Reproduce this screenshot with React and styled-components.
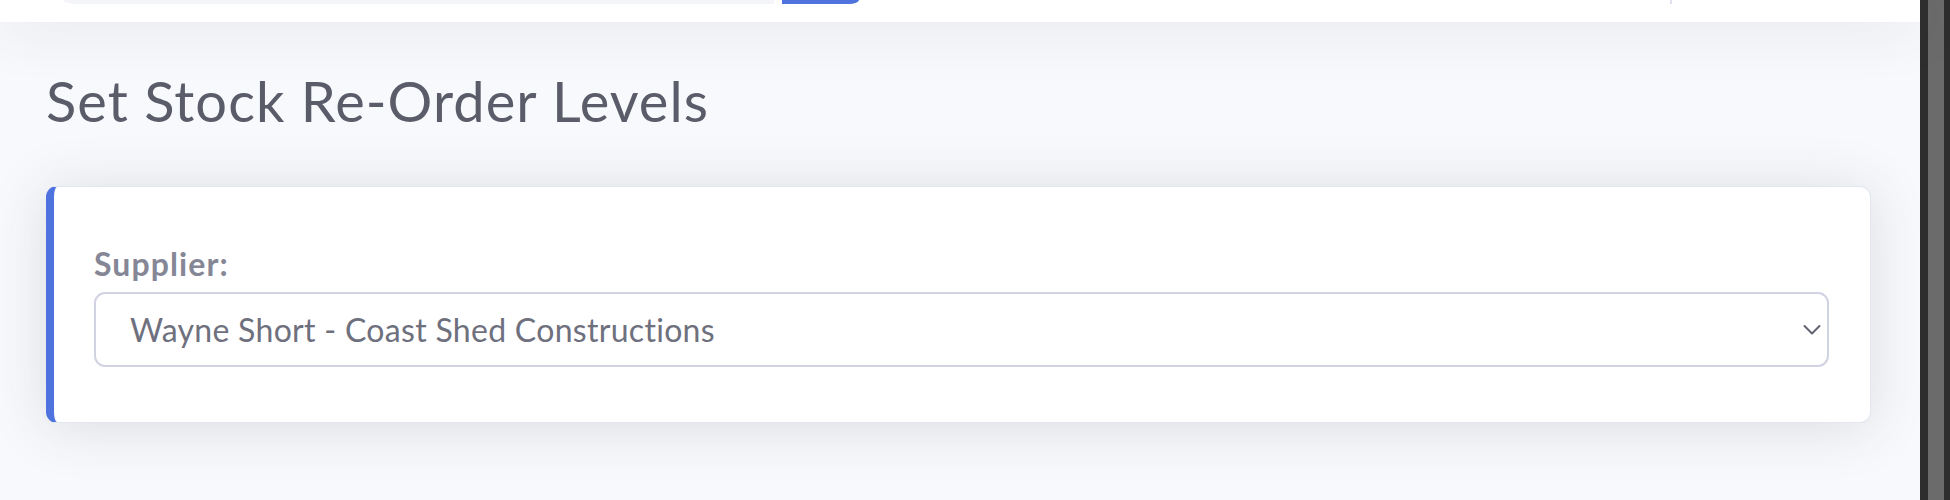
import React from "react";
import styled, { createGlobalStyle } from "styled-components";

const GlobalStyle = createGlobalStyle`
  html, body {
    margin: 0;
    padding: 0;
    background: #f8f9fc;
  }
  body {
    font-family: "Lato", "Noto Sans", sans-serif;
    -webkit-font-smoothing: antialiased;
  }
  * { box-sizing: border-box; }
`;

const Shell = styled.div`
  display: flex;
  width: 1950px;
  height: 500px;
  overflow: hidden;
`;

const Main = styled.div`
  flex: 1;
  display: flex;
  flex-direction: column;
  background: #f8f9fc;
  min-width: 0;
`;

const Topbar = styled.header`
  position: relative;
  z-index: 1;
  flex: none;
  height: 22px;
  display: flex;
  align-items: flex-start;
  padding-left: 63px;
  background: #ffffff;
  box-shadow: 0 4px 56px 0 rgba(58, 59, 69, 0.15);
`;

const SearchInput = styled.div`
  width: 711px;
  height: 4px;
  background: #f4f5f9;
  border-bottom-left-radius: 14px 4px;
`;

const SearchButton = styled.div`
  width: 77px;
  height: 4px;
  margin-left: 8px;
  background: #4e73df;
  border-bottom-right-radius: 10px 4px;
`;

const TopDivider = styled.div`
  width: 2px;
  height: 4px;
  margin-left: auto;
  margin-right: 248px;
  background: #dfe1ec;
`;

const Content = styled.main`
  flex: 1;
  padding: 45px 49px 0 46px;
`;

const Title = styled.h1`
  margin: 0 0 52px;
  font-size: 56px;
  line-height: 67px;
  font-weight: 400;
  letter-spacing: 1.05px;
  color: #5a5c69;
`;

const Card = styled.section`
  background: #ffffff;
  border: 1px solid #e3e6f0;
  border-left: 8px solid #4e73df;
  border-radius: 11px;
  box-shadow: 0 4px 56px 0 rgba(58, 59, 69, 0.15);
  padding: 57px 41px 55px 40px;
`;

const Label = styled.label`
  display: block;
  margin-bottom: 8px;
  font-size: 32px;
  line-height: 40px;
  font-weight: 700;
  letter-spacing: 1.1px;
  color: #858796;
`;

const SelectWrap = styled.div`
  position: relative;
`;

const Select = styled.select`
  display: block;
  width: 100%;
  height: 75px;
  margin: 0;
  padding: 0 56px 0 34px;
  appearance: none;
  -webkit-appearance: none;
  background: #ffffff;
  border: 2px solid #d1d3e2;
  border-radius: 11px;
  font-family: inherit;
  font-size: 32px;
  letter-spacing: 0.3px;
  color: #6e707e;
  outline: none;
`;

const Chevron = styled.svg`
  position: absolute;
  right: 8px;
  top: 50%;
  transform: translateY(-50%);
  pointer-events: none;
`;

const WindowEdge = styled.div`
  flex: none;
  width: 30px;
  background: #6b6b6b;
  border-left: 8px solid #2e2e2e;
  border-right: 6px solid #2e2e2e;
`;

export default function App() {
  return (
    <>
      <GlobalStyle />
      <Shell>
        <Main>
          <Topbar>
            <SearchInput />
            <SearchButton />
            <TopDivider />
          </Topbar>
          <Content>
            <Title>Set Stock Re-Order Levels</Title>
            <Card>
              <Label htmlFor="supplier">Supplier:</Label>
              <SelectWrap>
                <Select id="supplier" defaultValue="wayne">
                  <option value="wayne">Wayne Short - Coast Shed Constructions</option>
                </Select>
                <Chevron width="18" height="11" viewBox="0 0 18 11" aria-hidden="true">
                  <path d="M1.5 1.5 L9 9 L16.5 1.5" fill="none" stroke="#62646f" strokeWidth="2" strokeLinecap="round" strokeLinejoin="round" />
                </Chevron>
              </SelectWrap>
            </Card>
          </Content>
        </Main>
        <WindowEdge />
      </Shell>
    </>
  );
}
